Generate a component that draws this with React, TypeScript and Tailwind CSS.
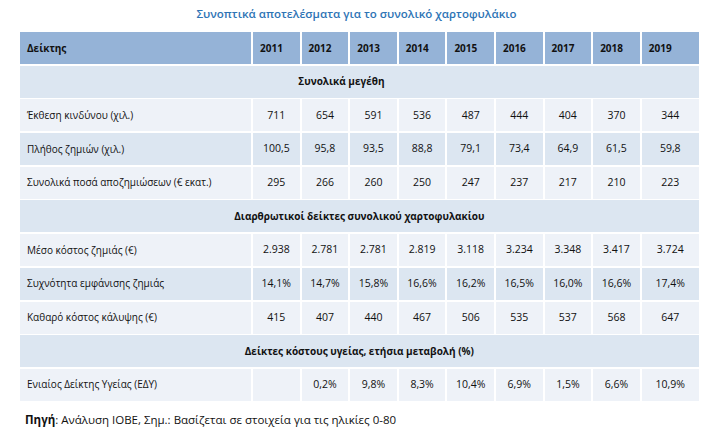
const YEARS = ['2011', '2012', '2013', '2014', '2015', '2016', '2017', '2018', '2019'];

type Row =
  | { kind: 'section'; label: string; pad?: string }
  | { kind: 'data'; label: string; values: string[]; shade: 'light' | 'dark' };

const ROWS: Row[] = [
  { kind: 'section', label: 'Συνολικά μεγέθη', pad: 'pr-[36px]' },
  { kind: 'data', label: 'Έκθεση κινδύνου (χιλ.)', values: ['711', '654', '591', '536', '487', '444', '404', '370', '344'], shade: 'light' },
  { kind: 'data', label: 'Πλήθος ζημιών (χιλ.)', values: ['100,5', '95,8', '93,5', '88,8', '79,1', '73,4', '64,9', '61,5', '59,8'], shade: 'dark' },
  { kind: 'data', label: 'Συνολικά ποσά αποζημιώσεων (€ εκατ.)', values: ['295', '266', '260', '250', '247', '237', '217', '210', '223'], shade: 'light' },
  { kind: 'section', label: 'Διαρθρωτικοί δείκτες συνολικού χαρτοφυλακίου' },
  { kind: 'data', label: 'Μέσο κόστος ζημιάς (€)', values: ['2.938', '2.781', '2.781', '2.819', '3.118', '3.234', '3.348', '3.417', '3.724'], shade: 'light' },
  { kind: 'data', label: 'Συχνότητα εμφάνισης ζημιάς', values: ['14,1%', '14,7%', '15,8%', '16,6%', '16,2%', '16,5%', '16,0%', '16,6%', '17,4%'], shade: 'dark' },
  { kind: 'data', label: 'Καθαρό κόστος κάλυψης (€)', values: ['415', '407', '440', '467', '506', '535', '537', '568', '647'], shade: 'light' },
  { kind: 'section', label: 'Δείκτες κόστους υγείας, ετήσια μεταβολή (%)' },
  { kind: 'data', label: 'Ενιαίος Δείκτης Υγείας (ΕΔΥ)', values: ['', '0,2%', '9,8%', '8,3%', '10,4%', '6,9%', '1,5%', '6,6%', '10,9%'], shade: 'light' },
];

export default function App() {
  return (
    <div className="w-[713px] h-[434px] bg-white text-[#111] font-['Open_Sans',sans-serif] overflow-hidden">
      <h1 className="pt-[5px] h-[32px] text-center text-[11.5px] font-semibold text-[#2e74b5]">
        Συνοπτικά αποτελέσματα για το συνολικό χαρτοφυλάκιο
      </h1>

      <div className="ml-[20px] grid grid-cols-[231px_repeat(8,46.6px)_57px] gap-x-[2px] gap-y-[1.7px] auto-rows-[32px] text-[10px]">
        {/* Header */}
        <div className="bg-[#95b3d7] flex items-center pl-[7px] font-bold">Δείκτης</div>
        {YEARS.map((y) => (
          <div key={y} className="bg-[#95b3d7] flex items-center pl-[7px] font-bold">
            {y}
          </div>
        ))}

        {ROWS.map((row, i) =>
          row.kind === 'section' ? (
            <div
              key={i}
              className={`col-span-10 bg-[#dce6f1] flex items-center justify-center font-bold ${row.pad || ''}`}
            >
              {row.label}
            </div>
          ) : (
            <div key={i} className="contents">
              <div className={`${row.shade === 'dark' ? 'bg-[#dce6f1]' : 'bg-[#eef2f8]'} flex items-center pl-[7px]`}>
                {row.label}
              </div>
              {row.values.map((v, j) => (
                <div
                  key={j}
                  className={`${row.shade === 'dark' ? 'bg-[#dce6f1]' : 'bg-[#eef2f8]'} flex items-center justify-center text-[10.5px]`}
                >
                  {v}
                </div>
              ))}
            </div>
          )
        )}
      </div>

      <p className="ml-[25px] mt-[10px] text-[11.5px]">
        <span className="font-bold">Πηγή</span>: Ανάλυση ΙΟΒΕ, Σημ.: Βασίζεται σε στοιχεία για τις ηλικίες 0-80
      </p>
    </div>
  );
}
